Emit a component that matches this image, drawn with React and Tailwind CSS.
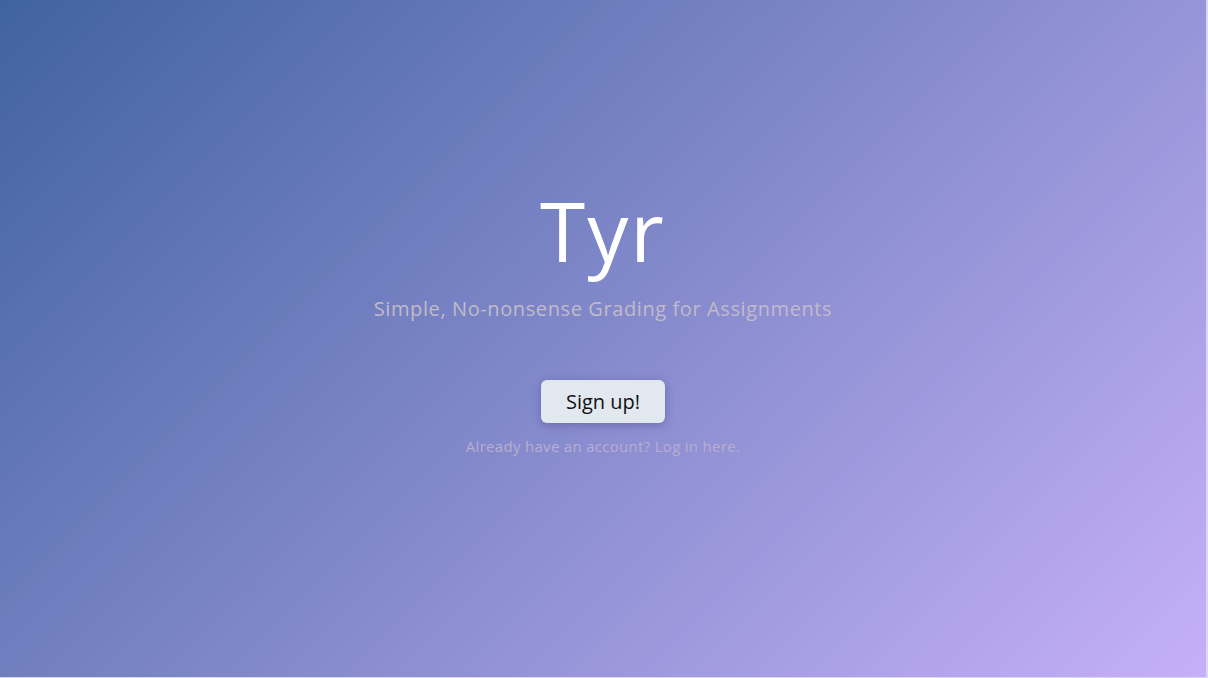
import React from 'react';

const App = () => {
  return (
    <div className="h-screen w-full bg-[linear-gradient(135deg,#40639f,#c6b0f8)] border-r-2 border-b border-[#ddd6f2] font-['Open_Sans',sans-serif]">

      <div className="h-full flex flex-col items-center justify-center pb-[30px]">

        <h1 className="text-[82px] leading-none text-white font-normal tracking-[2px]">
          Tyr
        </h1>

        <p className="mt-[23px] text-[20px] text-[#c3bac9] tracking-[0.6px]">
          Simple, No-nonsense Grading for Assignments
        </p>

        <button className="mt-[56px] w-[124px] h-[43px] bg-[#e2e8f0] rounded-md shadow-[0_2px_10px_rgba(60,40,120,0.35)] text-[20px] text-[#111]">
          Sign up!
        </button>

        <a href="#" className="mt-[12px] text-[15px] text-[#b8aed0] tracking-[0.3px]">
          Already have an account? Log in here.
        </a>

      </div>
    </div>
  );
};

export default App;
